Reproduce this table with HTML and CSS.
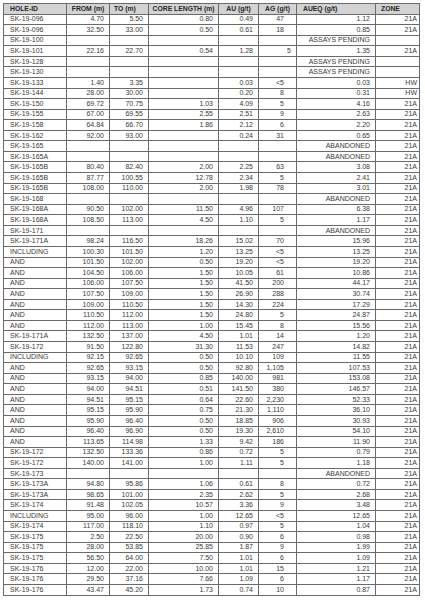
FILE: index.html
```html
<!DOCTYPE html>
<html>
<head>
<meta charset="utf-8">
<link rel="stylesheet" href="styles.css">
</head>
<body>
<table class="assay">
<colgroup>
<col class="c1"><col class="c2"><col class="c3"><col class="c4"><col class="c5"><col class="c6"><col class="c7"><col class="c8">
</colgroup>
<thead>
<tr><th class="hl">HOLE-ID</th><th class="hc">FROM (m)</th><th class="hto">TO (m)</th><th class="hc">CORE LENGTH (m)</th><th class="hc">AU (g/t)</th><th class="hc">AG (g/t)</th><th class="hq">AUEQ (g/t)</th><th class="hz">ZONE</th></tr>
</thead>
<tbody>
<tr><td class="id">SK-19-096</td><td>4.70</td><td>5.50</td><td>0.80</td><td>0.49</td><td class="ag">47</td><td>1.12</td><td class="zn">21A</td></tr>
<tr><td class="id">SK-19-096</td><td>32.50</td><td>33.00</td><td>0.50</td><td>0.61</td><td class="ag">18</td><td>0.85</td><td class="zn">21A</td></tr>
<tr><td class="id">SK-19-100</td><td></td><td></td><td></td><td></td><td class="ag"></td><td>ASSAYS PENDING</td><td class="zn"></td></tr>
<tr><td class="id">SK-19-101</td><td>22.16</td><td>22.70</td><td>0.54</td><td>1.28</td><td class="ag ag2">5</td><td>1.35</td><td class="zn">21A</td></tr>
<tr><td class="id">SK-19-128</td><td></td><td></td><td></td><td></td><td class="ag"></td><td>ASSAYS PENDING</td><td class="zn"></td></tr>
<tr><td class="id">SK-19-130</td><td></td><td></td><td></td><td></td><td class="ag"></td><td>ASSAYS PENDING</td><td class="zn"></td></tr>
<tr><td class="id">SK-19-133</td><td>1.40</td><td>3.35</td><td></td><td>0.03</td><td class="ag">&lt;5</td><td>0.03</td><td class="zn">HW</td></tr>
<tr><td class="id">SK-19-144</td><td>28.00</td><td>30.00</td><td></td><td>0.20</td><td class="ag">8</td><td>0.31</td><td class="zn">HW</td></tr>
<tr><td class="id">SK-19-150</td><td>69.72</td><td>70.75</td><td>1.03</td><td>4.09</td><td class="ag">5</td><td>4.16</td><td class="zn">21A</td></tr>
<tr><td class="id">SK-19-155</td><td>67.00</td><td>69.55</td><td>2.55</td><td>2.51</td><td class="ag">9</td><td>2.63</td><td class="zn">21A</td></tr>
<tr><td class="id">SK-19-158</td><td>64.84</td><td>66.70</td><td>1.86</td><td>2.12</td><td class="ag">6</td><td>2.20</td><td class="zn">21A</td></tr>
<tr><td class="id">SK-19-162</td><td>92.00</td><td>93.00</td><td></td><td>0.24</td><td class="ag">31</td><td>0.65</td><td class="zn">21A</td></tr>
<tr><td class="id">SK-19-165</td><td></td><td></td><td></td><td></td><td class="ag"></td><td>ABANDONED</td><td class="zn">21A</td></tr>
<tr><td class="id">SK-19-165A</td><td></td><td></td><td></td><td></td><td class="ag"></td><td>ABANDONED</td><td class="zn">21A</td></tr>
<tr><td class="id">SK-19-165B</td><td>80.40</td><td>82.40</td><td>2.00</td><td>2.25</td><td class="ag">63</td><td>3.08</td><td class="zn">21A</td></tr>
<tr><td class="id">SK-19-165B</td><td>87.77</td><td>100.55</td><td>12.78</td><td>2.34</td><td class="ag">5</td><td>2.41</td><td class="zn">21A</td></tr>
<tr><td class="id">SK-19-165B</td><td>108.00</td><td>110.00</td><td>2.00</td><td>1.98</td><td class="ag">78</td><td>3.01</td><td class="zn">21A</td></tr>
<tr><td class="id">SK-19-168</td><td></td><td></td><td></td><td></td><td class="ag"></td><td>ABANDONED</td><td class="zn">21A</td></tr>
<tr><td class="id">SK-19-168A</td><td>90.50</td><td>102.00</td><td>11.50</td><td>4.96</td><td class="ag">107</td><td>6.38</td><td class="zn">21A</td></tr>
<tr><td class="id">SK-19-168A</td><td>108.50</td><td>113.00</td><td>4.50</td><td>1.10</td><td class="ag">5</td><td>1.17</td><td class="zn">21A</td></tr>
<tr><td class="id">SK-19-171</td><td></td><td></td><td></td><td></td><td class="ag"></td><td>ABANDONED</td><td class="zn">21A</td></tr>
<tr><td class="id">SK-19-171A</td><td>98.24</td><td>116.50</td><td>18.26</td><td>15.02</td><td class="ag">70</td><td>15.96</td><td class="zn">21A</td></tr>
<tr><td class="id">INCLUDING</td><td>100.30</td><td>101.50</td><td>1.20</td><td>13.25</td><td class="ag">&lt;5</td><td>13.25</td><td class="zn">21A</td></tr>
<tr><td class="id">AND</td><td>101.50</td><td>102.00</td><td>0.50</td><td>19.20</td><td class="ag">&lt;5</td><td>19.20</td><td class="zn">21A</td></tr>
<tr><td class="id">AND</td><td>104.50</td><td>106.00</td><td>1.50</td><td>10.05</td><td class="ag">61</td><td>10.86</td><td class="zn">21A</td></tr>
<tr><td class="id">AND</td><td>106.00</td><td>107.50</td><td>1.50</td><td>41.50</td><td class="ag">200</td><td>44.17</td><td class="zn">21A</td></tr>
<tr><td class="id">AND</td><td>107.50</td><td>109.00</td><td>1.50</td><td>26.90</td><td class="ag">288</td><td>30.74</td><td class="zn">21A</td></tr>
<tr><td class="id">AND</td><td>109.00</td><td>110.50</td><td>1.50</td><td>14.30</td><td class="ag">224</td><td>17.29</td><td class="zn">21A</td></tr>
<tr><td class="id">AND</td><td>110.50</td><td>112.00</td><td>1.50</td><td>24.80</td><td class="ag">5</td><td>24.87</td><td class="zn">21A</td></tr>
<tr><td class="id">AND</td><td>112.00</td><td>113.00</td><td>1.00</td><td>15.45</td><td class="ag">8</td><td>15.56</td><td class="zn">21A</td></tr>
<tr><td class="id">SK-19-171A</td><td>132.50</td><td>137.00</td><td>4.50</td><td>1.01</td><td class="ag">14</td><td>1.20</td><td class="zn">21A</td></tr>
<tr><td class="id">SK-19-172</td><td>91.50</td><td>122.80</td><td>31.30</td><td>11.53</td><td class="ag">247</td><td>14.82</td><td class="zn">21A</td></tr>
<tr><td class="id">INCLUDING</td><td>92.15</td><td>92.65</td><td>0.50</td><td>10.10</td><td class="ag">109</td><td>11.55</td><td class="zn">21A</td></tr>
<tr><td class="id">AND</td><td>92.65</td><td>93.15</td><td>0.50</td><td>92.80</td><td class="ag">1,105</td><td>107.53</td><td class="zn">21A</td></tr>
<tr><td class="id">AND</td><td>93.15</td><td>94.00</td><td>0.85</td><td>140.00</td><td class="ag">981</td><td>153.08</td><td class="zn">21A</td></tr>
<tr><td class="id">AND</td><td>94.00</td><td>94.51</td><td>0.51</td><td>141.50</td><td class="ag">380</td><td>146.57</td><td class="zn">21A</td></tr>
<tr><td class="id">AND</td><td>94.51</td><td>95.15</td><td>0.64</td><td>22.60</td><td class="ag">2,230</td><td>52.33</td><td class="zn">21A</td></tr>
<tr><td class="id">AND</td><td>95.15</td><td>95.90</td><td>0.75</td><td>21.30</td><td class="ag">1,110</td><td>36.10</td><td class="zn">21A</td></tr>
<tr><td class="id">AND</td><td>95.90</td><td>96.40</td><td>0.50</td><td>18.85</td><td class="ag">906</td><td>30.93</td><td class="zn">21A</td></tr>
<tr><td class="id">AND</td><td>96.40</td><td>96.90</td><td>0.50</td><td>19.30</td><td class="ag">2,610</td><td>54.10</td><td class="zn">21A</td></tr>
<tr><td class="id">AND</td><td>113.65</td><td>114.98</td><td>1.33</td><td>9.42</td><td class="ag">186</td><td>11.90</td><td class="zn">21A</td></tr>
<tr><td class="id">SK-19-172</td><td>132.50</td><td>133.36</td><td>0.86</td><td>0.72</td><td class="ag">5</td><td>0.79</td><td class="zn">21A</td></tr>
<tr><td class="id">SK-19-172</td><td>140.00</td><td>141.00</td><td>1.00</td><td>1.11</td><td class="ag">5</td><td>1.18</td><td class="zn">21A</td></tr>
<tr><td class="id">SK-19-173</td><td></td><td></td><td></td><td></td><td class="ag"></td><td>ABANDONED</td><td class="zn">21A</td></tr>
<tr><td class="id">SK-19-173A</td><td>94.80</td><td>95.86</td><td>1.06</td><td>0.61</td><td class="ag">8</td><td>0.72</td><td class="zn">21A</td></tr>
<tr><td class="id">SK-19-173A</td><td>98.65</td><td>101.00</td><td>2.35</td><td>2.62</td><td class="ag">5</td><td>2.68</td><td class="zn">21A</td></tr>
<tr><td class="id">SK-19-174</td><td>91.48</td><td>102.05</td><td>10.57</td><td>3.36</td><td class="ag">9</td><td>3.48</td><td class="zn">21A</td></tr>
<tr><td class="id">INCLUDING</td><td>95.00</td><td>96.00</td><td>1.00</td><td>12.65</td><td class="ag">&lt;5</td><td>12.65</td><td class="zn">21A</td></tr>
<tr><td class="id">SK-19-174</td><td>117.00</td><td>118.10</td><td>1.10</td><td>0.97</td><td class="ag">5</td><td>1.04</td><td class="zn">21A</td></tr>
<tr><td class="id">SK-19-175</td><td>2.50</td><td>22.50</td><td>20.00</td><td>0.90</td><td class="ag">6</td><td>0.98</td><td class="zn">21A</td></tr>
<tr><td class="id">SK-19-175</td><td>28.00</td><td>53.85</td><td>25.85</td><td>1.87</td><td class="ag">9</td><td>1.99</td><td class="zn">21A</td></tr>
<tr><td class="id">SK-19-175</td><td>56.50</td><td>64.00</td><td>7.50</td><td>1.01</td><td class="ag">6</td><td>1.09</td><td class="zn">21A</td></tr>
<tr><td class="id">SK-19-176</td><td>12.00</td><td>22.00</td><td>10.00</td><td>1.01</td><td class="ag">15</td><td>1.21</td><td class="zn">21A</td></tr>
<tr><td class="id">SK-19-176</td><td>29.50</td><td>37.16</td><td>7.66</td><td>1.09</td><td class="ag">6</td><td>1.17</td><td class="zn">21A</td></tr>
<tr><td class="id">SK-19-176</td><td>43.47</td><td>45.20</td><td>1.73</td><td>0.74</td><td class="ag">10</td><td>0.87</td><td class="zn">21A</td></tr>
</tbody>
</table>
</body>
</html>
```
FILE: styles.css
```css
html, body {
  margin: 0;
  padding: 0;
  background: #ffffff;
}

body {
  padding: 3px 0 0 3px;
  font-family: "Liberation Sans", Arial, sans-serif;
}

.assay {
  border-collapse: collapse;
  table-layout: fixed;
  width: 416px;
  font-size: 7px;
  color: #3a3a3a;
}

.c1 { width: 63px; }
.c2 { width: 43px; }
.c3 { width: 39px; }
.c4 { width: 70px; }
.c5 { width: 40px; }
.c6 { width: 38px; }
.c7 { width: 79px; }
.c8 { width: 44px; }

.assay tr {
  height: 10.57px;
}

.assay th,
.assay td {
  border: 1px solid #6a6a6a;
  padding: 0 5px 0 0;
  line-height: 8px;
  height: 9.57px;
  box-sizing: border-box;
  white-space: nowrap;
  overflow: hidden;
  vertical-align: middle;
  text-align: right;
}

.assay th {
  background: #d3d3d3;
  color: #262626;
  font-weight: bold;
  font-size: 6.8px;
}

.assay .hl { text-align: left; padding-left: 6px; }
.assay .hc { text-align: center; padding: 0; }
.assay .hto { text-align: left; padding-left: 4px; }
.assay .hq { text-align: left; padding-left: 6px; }
.assay .hz { text-align: left; padding-left: 5px; }

.assay .id { text-align: left; padding-left: 6px; }
.assay .ag { padding-right: 12px; }
.assay .ag2 { padding-right: 5px; }
.assay .zn { padding-right: 2px; }
```
